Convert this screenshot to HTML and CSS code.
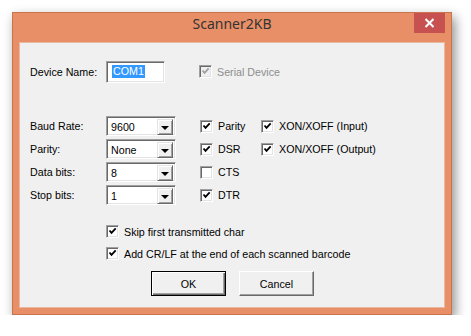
FILE: index.html
```html
<!DOCTYPE html>
<html lang="en">
<head>
  <meta charset="UTF-8" />
  <title>Scanner2KB</title>
  <link rel="stylesheet" href="styles.css">
</head>
<body>

  <div class="window">
    <div class="titlebar">
      <span></span>
      <span class="title">Scanner2KB</span>
      <span class="close">
        <svg width="11" height="10" viewBox="0 0 11 10"><path d="M1.5 1 L9.5 9 M9.5 1 L1.5 9" stroke="#fff" stroke-width="2"/></svg>
      </span>
    </div>

    <form class="client">
      <div class="row-device">
        <label class="lbl">Device Name:</label>
        <div class="textbox"><span class="sel">COM1</span></div>
        <label class="check disabled serial-dev">
          <span class="box checked"></span>Serial Device
        </label>
      </div>

      <div class="serial">
        <label class="lbl">Baud Rate:</label>
        <div class="combo"><span class="val">9600</span><span class="drop"></span></div>
        <label class="check"><span class="box checked"></span>Parity</label>
        <label class="check"><span class="box checked"></span>XON/XOFF (Input)</label>

        <label class="lbl">Parity:</label>
        <div class="combo"><span class="val">None</span><span class="drop"></span></div>
        <label class="check"><span class="box checked"></span>DSR</label>
        <label class="check"><span class="box checked"></span>XON/XOFF (Output)</label>

        <label class="lbl">Data bits:</label>
        <div class="combo"><span class="val">8</span><span class="drop"></span></div>
        <label class="check"><span class="box"></span>CTS</label>
        <span></span>

        <label class="lbl">Stop bits:</label>
        <div class="combo"><span class="val">1</span><span class="drop"></span></div>
        <label class="check"><span class="box checked"></span>DTR</label>
        <span></span>
      </div>

      <div class="options">
        <label class="check"><span class="box checked"></span>Skip first transmitted char</label>
        <label class="check"><span class="box checked"></span>Add CR/LF at the end of each scanned barcode</label>
      </div>

      <div class="buttons">
        <button type="button" class="btn default">OK</button>
        <button type="button" class="btn">Cancel</button>
      </div>
    </form>
  </div>

</body>
</html>
```

FILE: styles.css
```css
body {
  margin: 0;
  background: #fff;
  font-family: "Liberation Sans", Arial, sans-serif;
  font-size: 10.7px;
  color: #000;
}
.window {
  box-sizing: border-box;
  width: 440px;
  height: 303px;
  margin: 12px 0 0 12px;
  background: #e98f67;
  border: 1px solid #c9734f;
  box-shadow: 3px 5px 11px rgba(0, 0, 0, 0.45);
  display: flex;
  flex-direction: column;
}
.titlebar {
  height: 29px;
  display: grid;
  grid-template-columns: 1fr auto 1fr;
}
.title {
  font-family: "Noto Sans", sans-serif;
  font-size: 14px;
  color: #333;
  line-height: 19px;
  padding-top: 1px;
}
.close {
  justify-self: end;
  width: 31px;
  height: 20px;
  margin-right: 6px;
  background: #c75050;
  display: flex;
  align-items: center;
  justify-content: center;
}
.client {
  flex: 1;
  margin: 0 6px 6px 6px;
  background: #f0f0f0;
  border: 1px solid #e7b9a0;
}
.row-device {
  display: flex;
  align-items: center;
  height: 22px;
  margin-top: 18px;
  padding-left: 10px;
}
.lbl {
  width: 76px;
  flex: none;
}
.textbox {
  box-sizing: border-box;
  width: 59px;
  height: 22px;
  flex: none;
  background: #fff;
  border-top: 1px solid #a0a0a0;
  border-left: 1px solid #a0a0a0;
  border-right: 1px solid #fff;
  border-bottom: 1px solid #fff;
  box-shadow: inset 1px 1px 0 #696969, inset -1px -1px 0 #e3e3e3;
  padding: 3px 0 0 5px;
}
.sel {
  display: inline-block;
  background: #3399ff;
  color: #fff;
  line-height: 13px;
  padding: 0 1px;
}
.serial-dev {
  margin-left: 34px;
  margin-top: -1px;
}
.check {
  display: flex;
  align-items: center;
  gap: 5px;
  white-space: nowrap;
}
.box {
  box-sizing: border-box;
  width: 13px;
  height: 13px;
  background: #fff;
  border-top: 1px solid #a0a0a0;
  border-left: 1px solid #a0a0a0;
  border-right: 1px solid #fff;
  border-bottom: 1px solid #fff;
  box-shadow: inset 1px 1px 0 #696969, inset -1px -1px 0 #e3e3e3;
  flex: none;
}
.box.checked {
  background: #fff url("data:image/svg+xml;utf8,<svg xmlns='http://www.w3.org/2000/svg' width='11' height='11'><path d='M2.5 4.5 L4.5 6.8 L8.7 2.3' fill='none' stroke='black' stroke-width='1.8'/></svg>") no-repeat 0 0;
}
.disabled {
  color: #8d8d8d;
}
.disabled .box.checked {
  background: #f0f0f0 url("data:image/svg+xml;utf8,<svg xmlns='http://www.w3.org/2000/svg' width='11' height='11'><path d='M2.5 4.5 L4.5 6.8 L8.7 2.3' fill='none' stroke='%23a0a0a0' stroke-width='1.8'/></svg>") no-repeat 0 0;
}
.serial {
  display: grid;
  grid-template-columns: 76px 94px 61px auto;
  grid-auto-rows: 20px;
  row-gap: 3px;
  align-items: center;
  margin-top: 33px;
  padding-left: 10px;
}
.combo {
  box-sizing: border-box;
  width: 70px;
  height: 20px;
  display: flex;
  background: #fff;
  border-top: 1px solid #a0a0a0;
  border-left: 1px solid #a0a0a0;
  border-right: 1px solid #fff;
  border-bottom: 1px solid #fff;
  box-shadow: inset 1px 1px 0 #696969, inset -1px -1px 0 #e3e3e3;
  padding: 2px;
}
.val {
  flex: 1;
  line-height: 16px;
  padding-left: 2px;
}
.drop {
  box-sizing: border-box;
  width: 16px;
  height: 16px;
  background: #f0f0f0;
  border-top: 1px solid #e3e3e3;
  border-left: 1px solid #e3e3e3;
  border-right: 1px solid #696969;
  border-bottom: 1px solid #696969;
  box-shadow: inset 1px 1px 0 #fff, inset -1px -1px 0 #a0a0a0;
  display: flex;
  align-items: center;
  justify-content: center;
}
.drop::after {
  content: "";
  border-left: 4px solid transparent;
  border-right: 4px solid transparent;
  border-top: 4px solid #000;
  margin-top: 1px;
}
.options {
  display: flex;
  flex-direction: column;
  gap: 9px;
  margin-top: 20px;
  padding-left: 86px;
}
.options .check {
  height: 13px;
}
.buttons {
  display: flex;
  justify-content: center;
  gap: 13px;
  margin-top: 11px;
  padding-left: 1px;
}
.btn {
  box-sizing: border-box;
  width: 75px;
  height: 25px;
  font-family: "Liberation Sans", Arial, sans-serif;
  font-size: 10.7px;
  color: #000;
  background: #f0f0f0;
  border-top: 1px solid #fff;
  border-left: 1px solid #fff;
  border-right: 1px solid #696969;
  border-bottom: 1px solid #696969;
  box-shadow: inset -1px -1px 0 #a0a0a0;
  padding: 0;
}
.btn.default {
  border: 1px solid #000;
  box-shadow: inset 1px 1px 0 #fff, inset -1px -1px 0 #696969, inset -2px -2px 0 #a0a0a0;
}
```
